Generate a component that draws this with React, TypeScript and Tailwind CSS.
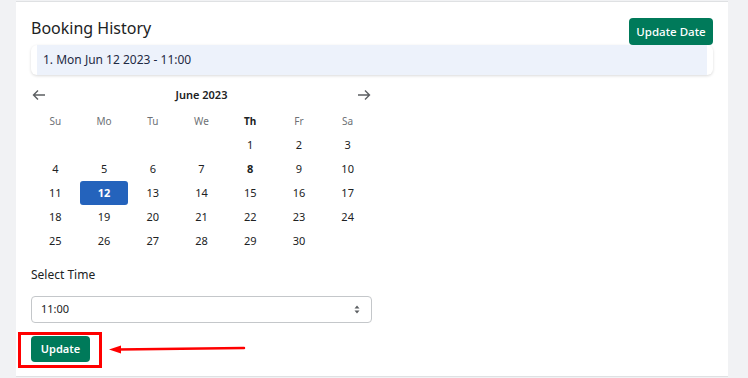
import React from "react";

const weeks: (number | null)[][] = [
  [null, null, null, null, 1, 2, 3],
  [4, 5, 6, 7, 8, 9, 10],
  [11, 12, 13, 14, 15, 16, 17],
  [18, 19, 20, 21, 22, 23, 24],
  [25, 26, 27, 28, 29, 30, null],
];
const days = ["Su", "Mo", "Tu", "We", "Th", "Fr", "Sa"];

export default function App() {
  return (
    <div
      className="w-[748px] h-[378px] bg-[#f1f2f4] flex overflow-hidden"
      style={{ fontFamily: '"Noto Sans", "Open Sans", sans-serif' }}
    >
      <div className="ml-[16px] mt-[1px] w-[712px] h-[376px] bg-white border-t border-b border-[#dfe1e3] relative">
        <div className="pl-[15px] pr-[15px] pt-[14px]">
          <div className="flex items-start justify-between">
            <div className="text-[16px] leading-[22px] text-[#202223] pt-[1px]">Booking History</div>
            <button className="mt-[2px] h-[27px] w-[84px] rounded-[4px] bg-[#007a5a] text-white text-[11.5px] font-medium">
              Update Date
            </button>
          </div>
          <div className="mt-0 h-[30px] bg-white rounded-[6px] shadow-[0_1px_3px_rgba(0,0,0,0.15)] px-[6px]">
            <div className="h-full bg-[#edf2fb] flex items-center pl-[6px] text-[12px] text-[#1f2a44]">
              1. Mon Jun 12 2023 - 11:00
            </div>
          </div>

          <div className="w-[341px] mt-[11px]">
            <div className="flex items-center justify-between h-[18px]">
              <svg width="14" height="12" viewBox="0 0 14 12" className="ml-[1px]">
                <path d="M13 6H1.5M6 1.5L1.5 6L6 10.5" fill="none" stroke="#5c5f62" strokeWidth="1.4" />
              </svg>
              <div className="text-[11px] font-semibold text-[#202223]">June 2023</div>
              <svg width="14" height="12" viewBox="0 0 14 12" className="mr-[1px]">
                <path d="M1 6H12.5M8 1.5L12.5 6L8 10.5" fill="none" stroke="#5c5f62" strokeWidth="1.4" />
              </svg>
            </div>
            <div className="grid grid-cols-7 mt-[5px] h-[24px] items-center">
              {days.map((d) => (
                <div
                  key={d}
                  className={
                    d === "Th"
                      ? "text-center text-[10px] font-bold text-[#202223]"
                      : "text-center text-[10px] text-[#6d7175]"
                  }
                >
                  {d}
                </div>
              ))}
            </div>
            {weeks.map((w, i) => (
              <div key={i} className="grid grid-cols-7">
                {w.map((d, j) => (
                  <div key={j} className="h-[24px] flex items-center justify-center">
                    {d === null ? null : d === 12 ? (
                      <div className="w-[48px] h-[24px] rounded-[3px] bg-[#2463bc] text-white text-[11px] font-bold flex items-center justify-center">
                        12
                      </div>
                    ) : (
                      <span
                        className={
                          d === 8
                            ? "text-[11px] font-bold text-[#202223]"
                            : "text-[11px] text-[#202223]"
                        }
                      >
                        {d}
                      </span>
                    )}
                  </div>
                ))}
              </div>
            ))}
          </div>

          <div className="mt-[14px] text-[12px] text-[#202223] leading-[16px]">Select Time</div>
          <div className="mt-[13px] w-[341px] h-[27px] border border-[#c4c7ca] rounded-[4px] flex items-center justify-between pl-[9px] pr-[11px]">
            <span className="text-[11px] text-[#202223]">11:00</span>
            <svg width="6" height="9" viewBox="0 0 6 9">
              <path d="M3 0.5L5.5 3.5H0.5Z M3 8.5L5.5 5.5H0.5Z" fill="#5c5f62" />
            </svg>
          </div>
          <div className="mt-[9px] flex items-center">
            <div className="ml-[-13px] border-[3px] border-[#ff0000] pl-[10px] pr-[9px] pt-[0px] pb-[3px]">
              <button className="h-[26px] w-[59px] rounded-[4px] bg-[#007a5a] text-white text-[11px] font-semibold">
                Update
              </button>
            </div>
            <svg width="140" height="10" viewBox="0 0 140 10" className="ml-[6px] mt-[-2px]">
              <path d="M10 5.5L136 4" stroke="#ff0000" strokeWidth="2.5" strokeLinecap="round" />
              <path d="M1 5.6L13 1.6L13 9.4Z" fill="#ff0000" />
            </svg>
          </div>
        </div>
      </div>
    </div>
  );
}
